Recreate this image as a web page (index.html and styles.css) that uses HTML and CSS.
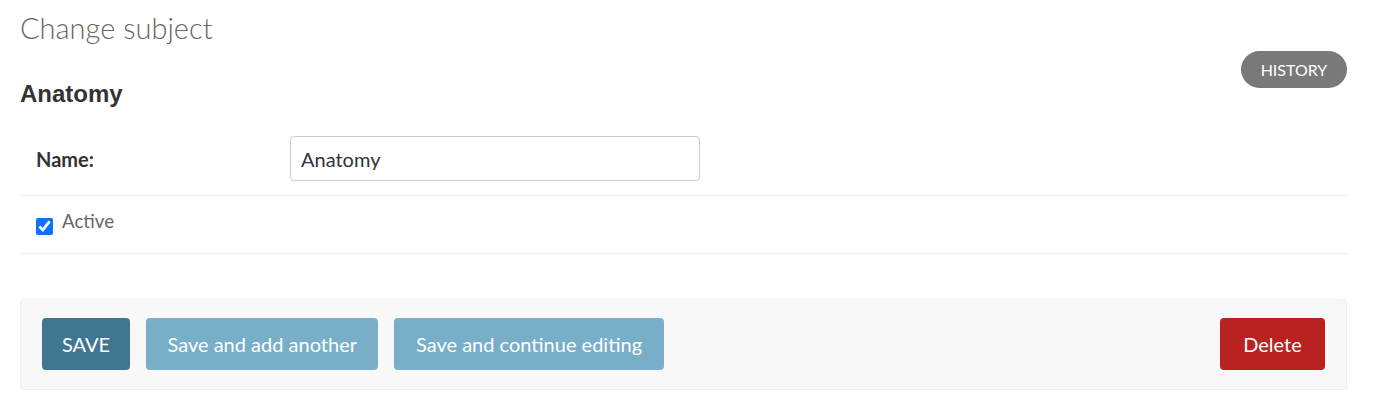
FILE: index.html
```html
<!DOCTYPE html>
<html>
<head>
<meta charset="utf-8">
<link rel="stylesheet" href="styles.css">
</head>
<body>
<div class="content">
  <h1 class="title">Change subject</h1>
  <div class="tools-row">
    <a class="history">HISTORY</a>
  </div>
  <h2 class="obj">Anatomy</h2>
  <div class="fieldset">
    <div class="form-row name-row">
      <label class="label">Name:</label>
      <input class="text-input" type="text" value="Anatomy">
    </div>
    <div class="form-row check-row">
      <input class="checkbox" type="checkbox" checked>
      <span class="check-label">Active</span>
    </div>
  </div>
  <div class="submit-row">
    <button class="btn btn-default">SAVE</button>
    <button class="btn btn-light">Save and add another</button>
    <button class="btn btn-light">Save and continue editing</button>
    <span class="spacer"></span>
    <button class="btn btn-danger">Delete</button>
  </div>
</div>
</body>
</html>
```

FILE: styles.css
```css
html, body {
  margin: 0;
  padding: 0;
  background: #fff;
}
body {
  font-family: "Lato", "Open Sans", sans-serif;
  color: #333;
}
.content {
  padding: 0 40px 0 20px;
}
.title {
  margin: 0;
  padding-top: 10px;
  height: 36px;
  font-size: 29px;
  font-weight: 300;
  color: #666;
  line-height: 36px;
}
.tools-row {
  display: flex;
  justify-content: flex-end;
  margin-top: 5px;
  height: 37px;
}
.history {
  display: flex;
  align-items: center;
  justify-content: center;
  width: 106px;
  height: 37px;
  border-radius: 19px;
  background: #797979;
  color: #fff;
  font-size: 16px;
}
.obj {
  margin: -7px 0 0 0;
  font-family: "Liberation Sans", Arial, sans-serif;
  font-size: 24px;
  font-weight: bold;
  color: #333;
  line-height: 26px;
  height: 26px;
}
.fieldset {
  margin-top: 12px;
}
.form-row {
  display: flex;
  border-bottom: 1px solid #eee;
  padding: 0 16px;
}
.name-row {
  align-items: center;
  padding-top: 17px;
  padding-bottom: 14px;
}
.label {
  width: 254px;
  font-weight: bold;
  font-size: 20px;
  color: #333;
}
.text-input {
  width: 410px;
  height: 45px;
  box-sizing: border-box;
  border: 1px solid #ccc;
  border-radius: 4px;
  padding: 0 10px;
  font-family: inherit;
  font-size: 20px;
  color: #333;
  margin: 0;
}
.check-row {
  align-items: flex-start;
  height: 58px;
  box-sizing: border-box;
  padding-top: 19px;
}
.checkbox {
  margin: 3px 9px 0 0;
  width: 17px;
  height: 17px;
  accent-color: #0a74ff;
}
.check-label {
  font-size: 18.7px;
  color: #666;
  line-height: 20px;
  margin-top: -4px;
}
.submit-row {
  display: flex;
  align-items: flex-start;
  gap: 16px;
  margin-top: 45px;
  background: #f8f8f8;
  border: 1px solid #eee;
  border-radius: 4px;
  padding: 18px 21px 0;
  height: 91px;
  box-sizing: border-box;
}
.spacer {
  flex: 1;
}
.btn {
  height: 52px;
  border: none;
  border-radius: 4px;
  color: #fff;
  font-family: inherit;
  font-size: 20px;
  padding: 0 21.5px;
  margin: 0;
}
.btn-default {
  background: #417690;
  width: 88px;
  padding: 0;
}
.btn-light {
  background: #79aec8;
}
.btn-danger {
  background: #ba2121;
  width: 105px;
  padding: 0;
}
```
